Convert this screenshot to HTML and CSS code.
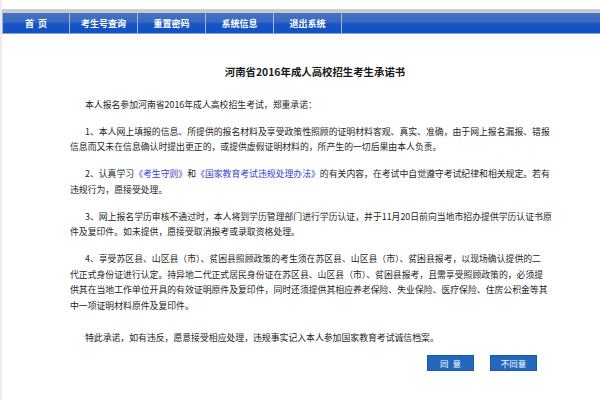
FILE: index.html
```html
<!DOCTYPE html>
<html lang="zh-CN">
<head>
<meta charset="utf-8">
<title>河南省2016年成人高校招生考生承诺书</title>
<link rel="stylesheet" href="styles.css">
</head>
<body>
<div class="page">
  <nav class="menu">
    <a class="menu-item" href="#">首&nbsp;&nbsp;页</a>
    <a class="menu-item" href="#">考生号查询</a>
    <a class="menu-item" href="#">重置密码</a>
    <a class="menu-item" href="#">系统信息</a>
    <a class="menu-item" href="#">退出系统</a>
  </nav>
  <div class="content">
    <h1 class="title">河南省2016年成人高校招生考生承诺书</h1>
    <p class="para">本人报名参加河南省2016年成人高校招生考试，郑重承诺：</p>
    <p class="para">1、本人网上填报的信息、所提供的报名材料及享受政策性照顾的证明材料客观、真实、准确，由于网上报名漏报、错报<br>信息而又未在信息确认时提出更正的，或提供虚假证明材料的，所产生的一切后果由本人负责。</p>
    <p class="para">2、认真学习<span class="link">《考生守则》</span>和<span class="link">《国家教育考试违规处理办法》</span>的有关内容，在考试中自觉遵守考试纪律和相关规定。若有<br>违规行为，愿接受处理。</p>
    <p class="para">3、网上报名学历审核不通过时，本人将到学历管理部门进行学历认证，并于11月20日前向当地市招办提供学历认证书原<br>件及复印件。如未提供，愿接受取消报考或录取资格处理。</p>
    <p class="para">4、享受苏区县、山区县（市）、贫困县照顾政策的考生须在苏区县、山区县（市）、贫困县报考，以现场确认提供的二<br>代正式身份证进行认定。持异地二代正式居民身份证在苏区县、山区县（市）、贫困县报考，且需享受照顾政策的，必须提<br>供其在当地工作单位开具的有效证明原件及复印件，同时还须提供其相应养老保险、失业保险、医疗保险、住房公积金等其<br>中一项证明材料原件及复印件。</p>
    <p class="para para-final">特此承诺，如有违反，愿意接受相应处理，违规事实记入本人参加国家教育考试诚信档案。</p>
    <div class="actions">
      <button class="btn" type="button">同&nbsp;&nbsp;意</button>
      <button class="btn" type="button">不同意</button>
    </div>
  </div>
</div>
</body>
</html>
```
FILE: styles.css
```css
html, body {
  margin: 0;
  padding: 0;
  background: #ffffff;
}

body {
  font-family: "Noto Sans CJK SC", "Liberation Sans", sans-serif;
  color: #262626;
}

.page {
  width: 600px;
  height: 400px;
  overflow: hidden;
  padding-top: 9px;
  box-sizing: border-box;
  border-left: 2px solid #ececec;
}

.menu {
  display: flex;
  height: 20px;
  border-top: 4px solid #cacaca;
  border-bottom: 1px solid #7fa3de;
  background: linear-gradient(#4472c2 0%, #3b69c0 45%, #1655c6 55%, #1251c4 100%);
}

.menu-item {
  width: 67px;
  border-right: 1px solid #9ab8ea;
  color: #ffffff;
  font-size: 9px;
  font-weight: bold;
  text-decoration: none;
  display: flex;
  align-items: center;
  justify-content: center;
  line-height: 1;
}

.menu-item:first-child {
  border-left: 1px solid #9ab8ea;
  width: 66px;
}

.content {
  margin-left: 68px;
  width: 486px;
  padding-top: 30px;
}

.title {
  margin: 0 0 17px 0;
  text-align: center;
  font-size: 10.4px;
  font-weight: bold;
  line-height: 16px;
  color: #1a1a1a;
  padding-left: 4px;
}

.para {
  margin: 0 0 11px 0;
  font-size: 8.85px;
  line-height: 15.7px;
  text-indent: 15px;
  white-space: nowrap;
}

.para-final {
  margin-top: 16px;
}

.link {
  color: #3a3fd0;
}

.actions {
  display: flex;
  justify-content: flex-end;
  gap: 16px;
  padding-right: 19px;
  margin-top: -1px;
}

.btn {
  width: 47px;
  height: 16px;
  padding: 0;
  border: 1px solid #1b5aa8;
  background: #2468bc;
  color: #ffffff;
  font-family: inherit;
  font-size: 8.5px;
  line-height: 14px;
}
```
